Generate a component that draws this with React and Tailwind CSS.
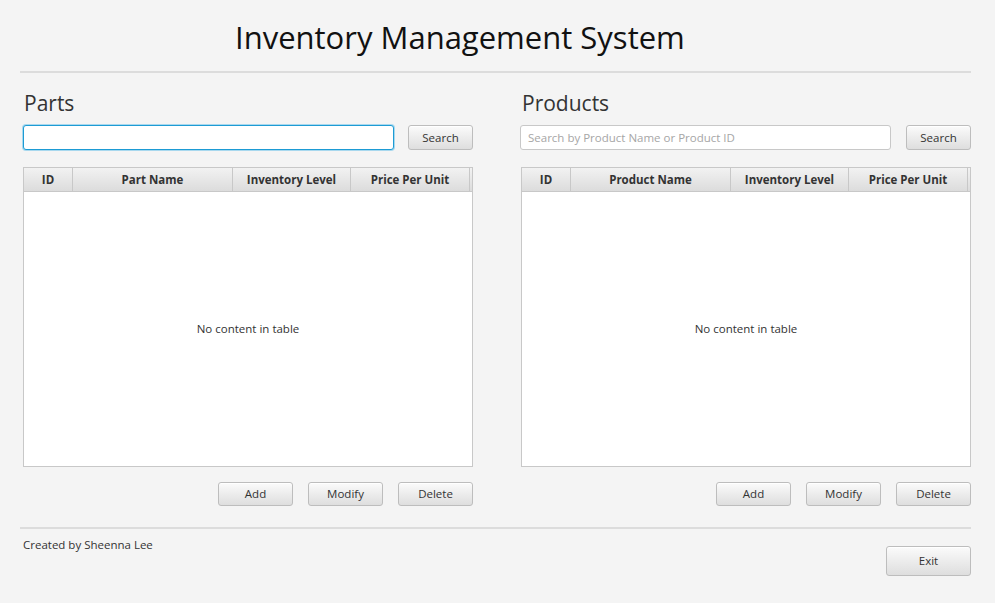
import React from "react";

const font = { fontFamily: '"Open Sans", "Noto Sans", sans-serif' };

function Btn({ children, className = "" }) {
  return (
    <button
      className={
        "flex items-center justify-center rounded-[3px] border border-[#bdbdbd] bg-gradient-to-b from-[#fbfbfb] to-[#dedede] text-[11.5px] text-[#333] shadow-[inset_0_1px_0_#fff] " +
        className
      }
    >
      {children}
    </button>
  );
}

function Table({ nameLabel }) {
  const cols = [
    { label: "ID", w: "w-[49px]" },
    { label: nameLabel, w: "w-[160px]" },
    { label: "Inventory Level", w: "w-[118px]" },
    { label: "Price Per Unit", w: "w-[119px]" },
  ];
  return (
    <div className="mt-[17px] flex h-[300px] w-[450px] flex-col border border-[#c8c8c8] bg-white">
      <div className="flex h-[24px] border-b border-[#c8c8c8] bg-gradient-to-b from-[#f2f2f2] to-[#dcdcdc]">
        {cols.map((c) => (
          <div
            key={c.label}
            className={"flex items-center justify-center border-r border-[#c8c8c8] text-[11.5px] font-bold text-[#333] " + c.w}
          >
            {c.label}
          </div>
        ))}
        <div className="flex-1" />
      </div>
      <div className="flex flex-1 items-center justify-center text-[11.5px] text-[#333]">
        No content in table
      </div>
    </div>
  );
}

function Panel({ title, placeholder, focused, nameLabel }) {
  return (
    <div className="flex w-[450px] flex-col">
      <div className="ml-[1px] h-[27px] text-[21px] leading-[27px] text-[#333]">{title}</div>
      <div className="mt-[8px] flex items-center justify-between">
        {focused ? (
          <div className="h-[25px] w-[371px] rounded-[3px] border border-[#1d9bd4] bg-white shadow-[0_0_0_1px_#a8d8ee]" />
        ) : (
          <div className="-ml-[1px] flex h-[25px] w-[371px] items-center rounded-[3px] border border-[#c8c8c8] bg-white px-[7px] text-[11.5px] text-[#a6a6a6]">
            {placeholder}
          </div>
        )}
        <Btn className="h-[25px] w-[65px]">Search</Btn>
      </div>
      <Table nameLabel={nameLabel} />
      <div className="mt-[15px] flex justify-end gap-[15px]">
        <Btn className="h-[24px] w-[75px]">Add</Btn>
        <Btn className="h-[24px] w-[75px]">Modify</Btn>
        <Btn className="h-[24px] w-[75px]">Delete</Btn>
      </div>
    </div>
  );
}

export default function App() {
  return (
    <div style={font} className="relative h-[603px] w-[995px] overflow-hidden bg-[#f4f4f4] px-[20px]">
      <div className="w-[951px]">
        {/* Title */}
        <div className="ml-[215px] pt-[15px] text-[31px] leading-[44px] text-[#111]">
          Inventory Management System
        </div>
        <div className="mt-[12px] h-[2px] w-[951px] bg-[#dcdcdc]" />

        {/* Panels */}
        <div className="ml-[3px] mt-[17px] flex gap-[48px]">
          <Panel title="Parts" focused nameLabel="Part Name" />
          <Panel
            title="Products"
            placeholder="Search by Product Name or Product ID"
            nameLabel="Product Name"
          />
        </div>

        <div className="mt-[21px] h-[2px] w-[951px] bg-[#dcdcdc]" />
        <div className="flex justify-between">
          <div className="ml-[3px] mt-[7px] text-[11.5px] text-[#333]">Created by Sheenna Lee</div>
          <Btn className="mt-[17px] h-[30px] w-[85px]">Exit</Btn>
        </div>
      </div>
    </div>
  );
}
